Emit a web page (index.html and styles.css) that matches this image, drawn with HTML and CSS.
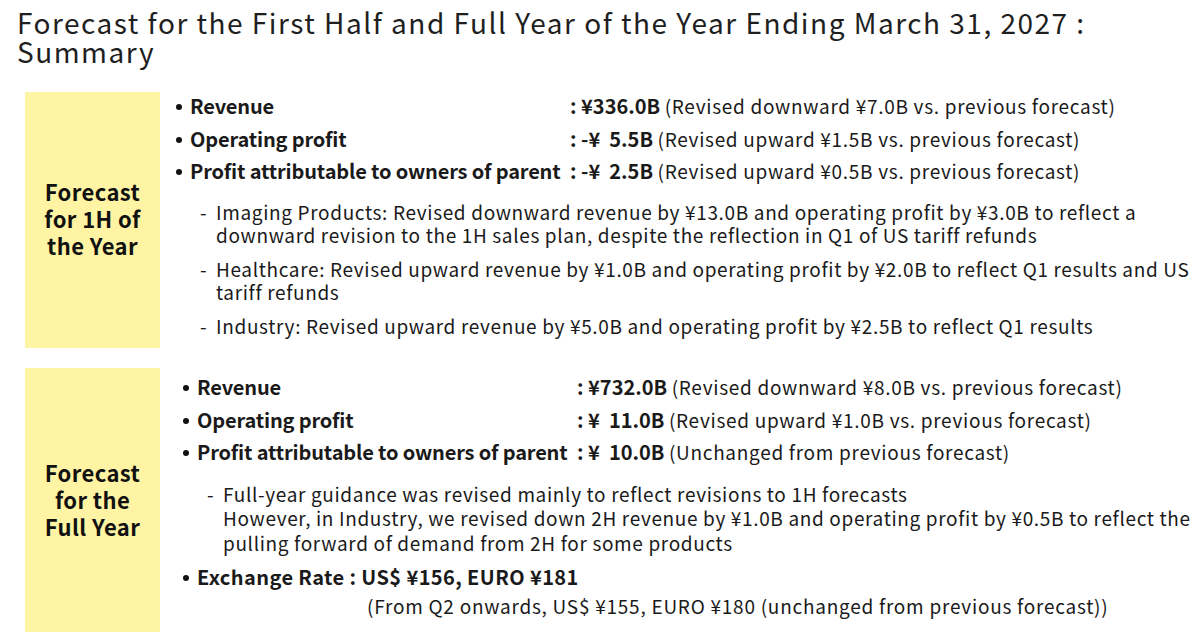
FILE: index.html
```html
<!DOCTYPE html>
<html lang="en">
<head>
<meta charset="utf-8">
<title>Forecast Summary</title>
<link rel="stylesheet" href="styles.css">
</head>
<body>
<h1 class="title">Forecast for the First Half and Full Year of the Year Ending March 31, 2027 :<br>Summary</h1>

<section class="block block-1h">
  <div class="label">Forecast<br>for 1H of<br>the Year</div>
  <div class="content">
    <ul class="metrics">
      <li><span class="name">Revenue</span><span class="value">: ¥336.0B</span> <span class="note">(Revised downward ¥7.0B vs. previous forecast)</span></li>
      <li><span class="name">Operating profit</span><span class="value">: -¥  5.5B</span> <span class="note">(Revised upward ¥1.5B vs. previous forecast)</span></li>
      <li><span class="name">Profit attributable to owners of parent</span><span class="value">: -¥  2.5B</span> <span class="note">(Revised upward ¥0.5B vs. previous forecast)</span></li>
    </ul>
    <ul class="details">
      <li>Imaging Products: Revised downward revenue by ¥13.0B and operating profit by ¥3.0B to reflect a<br>downward revision to the 1H sales plan, despite the reflection in Q1 of US tariff refunds</li>
      <li>Healthcare: Revised upward revenue by ¥1.0B and operating profit by ¥2.0B to reflect Q1 results and US<br>tariff refunds</li>
      <li>Industry: Revised upward revenue by ¥5.0B and operating profit by ¥2.5B to reflect Q1 results</li>
    </ul>
  </div>
</section>

<section class="block block-fy">
  <div class="label">Forecast<br>for the<br>Full Year</div>
  <div class="content">
    <ul class="metrics">
      <li><span class="name">Revenue</span><span class="value">: ¥732.0B</span> <span class="note">(Revised downward ¥8.0B vs. previous forecast)</span></li>
      <li><span class="name">Operating profit</span><span class="value">: ¥  11.0B</span> <span class="note">(Revised upward ¥1.0B vs. previous forecast)</span></li>
      <li><span class="name">Profit attributable to owners of parent</span><span class="value">: ¥  10.0B</span> <span class="note">(Unchanged from previous forecast)</span></li>
    </ul>
    <ul class="details details-fy">
      <li>Full-year guidance was revised mainly to reflect revisions to 1H forecasts<br>However, in Industry, we revised down 2H revenue by ¥1.0B and operating profit by ¥0.5B to reflect the<br>pulling forward of demand from 2H for some products</li>
    </ul>
    <ul class="metrics">
      <li><span class="value rate">Exchange Rate : US$ ¥156, EURO ¥181</span></li>
    </ul>
    <p class="sub-note">(From Q2 onwards, US$ ¥155, EURO ¥180 (unchanged from previous forecast))</p>
  </div>
</section>
</body>
</html>
```

FILE: styles.css
```css
html, body {
  margin: 0;
  padding: 0;
  background: #ffffff;
}

body {
  width: 1200px;
  height: 632px;
  overflow: hidden;
  font-family: "Noto Sans CJK JP", "Noto Sans", sans-serif;
  color: #1a1a1a;
}

.title {
  margin: 0;
  padding: 8px 0 0 17px;
  font-size: 28px;
  line-height: 29px;
  letter-spacing: 1.5px;
  font-weight: 400;
  color: #1f1f1f;
  height: 92px;
  box-sizing: border-box;
  white-space: nowrap;
}

.block {
  display: flex;
  margin-left: 25px;
}

.block-1h {
  height: 256px;
}

.block-fy {
  margin-top: 20px;
  height: 264px;
}

.label {
  width: 135px;
  flex: none;
  background: #fff4a3;
  display: flex;
  align-items: center;
  justify-content: center;
  text-align: center;
  font-weight: 700;
  font-size: 22px;
  line-height: 27px;
  letter-spacing: 0.4px;
  color: #111111;
  box-sizing: border-box;
}

.block-1h .label {
  padding-bottom: 4px;
}

.block-fy .label {
  padding-bottom: 2px;
}

.content {
  padding-left: 16px;
  flex: 1;
}

.block-1h .content {
  margin-top: -2px;
}

.block-fy .content {
  padding-left: 23px;
  margin-top: 3px;
}

.metrics {
  list-style: none;
  margin: 0;
  padding: 0;
}

.metrics li {
  position: relative;
  padding-left: 14px;
  font-size: 20px;
  line-height: 32.5px;
  white-space: pre;
}

.metrics li::before {
  content: "";
  position: absolute;
  left: 0;
  top: 14px;
  width: 6px;
  height: 6px;
  border-radius: 50%;
  background: #111111;
}

.name {
  display: inline-block;
  width: 380px;
  font-weight: 700;
  letter-spacing: -0.15px;
}

.value {
  font-weight: 700;
}

.rate {
  letter-spacing: 0.4px;
}

.note {
  font-weight: 400;
  font-size: 19px;
  letter-spacing: 0.7px;
}

.details {
  list-style: none;
  margin: 12.5px 0 0;
  padding: 0 0 0 24px;
}

.details li {
  position: relative;
  padding-left: 16px;
  font-size: 19px;
  line-height: 23px;
  letter-spacing: 0.65px;
  margin-bottom: 11px;
  white-space: nowrap;
}

.details li::before {
  content: "-";
  position: absolute;
  left: 0;
  top: 0;
}

.details-fy {
  margin-top: 13px;
  margin-bottom: 5.5px;
}

.details-fy li {
  line-height: 24.5px;
  margin-bottom: 0;
}

.sub-note {
  margin: 0;
  padding-left: 184px;
  font-size: 19px;
  line-height: 26px;
  letter-spacing: 0.75px;
}
```
